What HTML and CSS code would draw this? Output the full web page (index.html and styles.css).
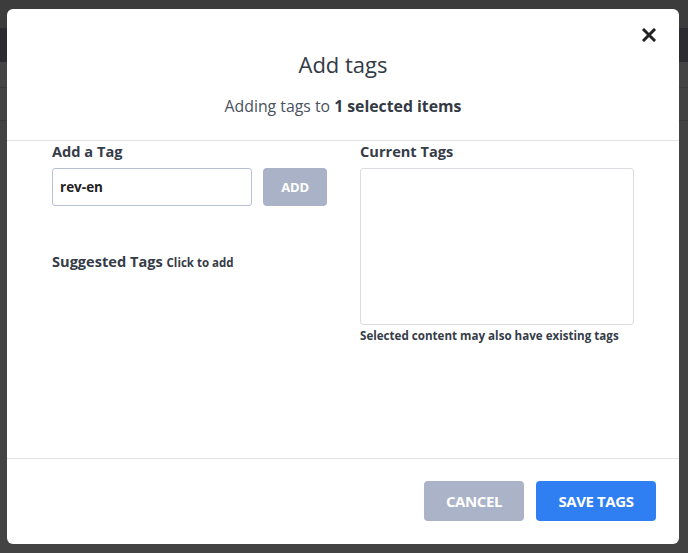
FILE: index.html
```html
<!DOCTYPE html>
<html>
<head>
<meta charset="utf-8">
<link rel="stylesheet" href="styles.css">
</head>
<body>
<div class="backdrop">
  <div class="modal">
    <button class="close" aria-label="Close">
      <svg width="14" height="14" viewBox="0 0 14 14"><path d="M2 2L12 12M12 2L2 12" stroke="#222" stroke-width="3" stroke-linecap="square"/></svg>
    </button>
    <div class="header">
      <h1 class="title">Add tags</h1>
      <p class="subtitle">Adding tags to <strong>1 selected items</strong></p>
    </div>
    <div class="body">
      <div class="col left">
        <div class="label">Add a Tag</div>
        <div class="add-row">
          <div class="input">rev-en</div>
          <button class="btn btn-add">ADD</button>
        </div>
        <div class="label suggested">Suggested Tags <span class="hint">Click to add</span></div>
      </div>
      <div class="col right">
        <div class="label">Current Tags</div>
        <div class="tagbox"></div>
        <div class="note">Selected content may also have existing tags</div>
      </div>
    </div>
    <div class="footer">
      <button class="btn btn-cancel">CANCEL</button>
      <button class="btn btn-save">SAVE TAGS</button>
    </div>
  </div>
</div>
</body>
</html>
```

FILE: styles.css
```css
* { box-sizing: border-box; }
html, body { margin: 0; padding: 0; }
body {
  width: 688px;
  height: 553px;
  overflow: hidden;
  font-family: "Open Sans", "Liberation Sans", sans-serif;
  color: #333a45;
}
.backdrop {
  width: 688px;
  height: 553px;
  padding: 9px 9px 9px 7px;
  background:
    linear-gradient(to bottom,
      #3c3c3c 0, #3c3c3c 28px,
      #2c2c30 28px, #2c2c30 62px,
      #444 62px, #444 87px,
      #3a3a3a 87px, #3a3a3a 88px,
      #434343 88px, #434343 120px,
      #3a3a3a 120px, #3a3a3a 121px,
      #434343 121px, #434343 100%);
}
.modal {
  position: relative;
  width: 672px;
  height: 535px;
  background: #fff;
  border-radius: 6px;
  display: flex;
  flex-direction: column;
}
.close {
  position: absolute;
  top: 16px;
  right: 20px;
  width: 20px;
  height: 20px;
  border: 0;
  background: transparent;
  padding: 0;
  display: flex;
  align-items: center;
  justify-content: center;
}
.header {
  height: 132px;
  border-bottom: 1px solid #e3e3e3;
  text-align: center;
  padding-top: 39px;
}
.title {
  margin: 0;
  font-size: 22px;
  font-weight: 400;
  line-height: 32px;
  color: #333a45;
}
.subtitle {
  margin: 16px 0 0;
  font-size: 15.8px;
  line-height: 20px;
  color: #4a5160;
}
.subtitle strong { font-weight: 700; color: #333a45; }
.body {
  flex: 1;
  display: flex;
  padding: 0 45px 0 45px;
  gap: 33px;
}
.col.left { width: 275px; }
.col.right { width: 274px; }
.label {
  font-size: 14.6px;
  font-weight: 700;
  line-height: 20px;
  color: #353c48;
}
.add-row {
  display: flex;
  gap: 11px;
  margin-top: 7px;
}
.input {
  width: 200px;
  height: 38px;
  border: 1px solid #b8c0d3;
  border-radius: 3px;
  padding: 0 7px;
  font-size: 13.5px;
  font-weight: 700;
  line-height: 36px;
  color: #222;
}
.btn {
  border: 0;
  border-radius: 4px;
  color: #fff;
  font-family: "Open Sans", "Liberation Sans", sans-serif;
  font-weight: 700;
  font-size: 15px;
  letter-spacing: -0.4px;
  padding: 0;
}
.btn-add {
  width: 64px;
  height: 38px;
  background: #aab2c7;
  font-size: 13px;
  letter-spacing: -0.2px;
}
.suggested { margin-top: 45px; }
.hint { font-size: 11.5px; }
.tagbox {
  margin-top: 7px;
  width: 274px;
  height: 157px;
  border: 1px solid #dcdde2;
  border-radius: 3px;
}
.note {
  margin-top: 3px;
  font-size: 11.6px;
  font-weight: 700;
  line-height: 16px;
  color: #353c48;
}
.footer {
  height: 86px;
  border-top: 1px solid #e3e3e3;
  display: flex;
  justify-content: flex-end;
  align-items: flex-start;
  gap: 12px;
  padding: 22px 23px 0 0;
}
.btn-cancel {
  width: 100px;
  height: 40px;
  background: #abb3c8;
}
.btn-save {
  width: 120px;
  height: 40px;
  background: #2f7ff2;
}
```
